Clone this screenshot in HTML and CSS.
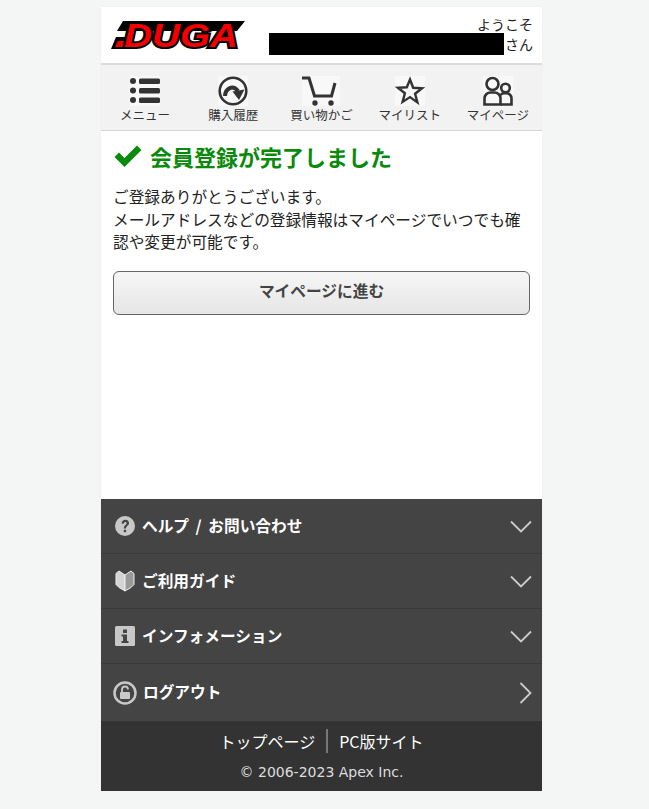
FILE: index.html
```html
<!DOCTYPE html>
<html lang="ja">
<head>
<meta charset="utf-8">
<title>DUGA</title>
<link rel="stylesheet" href="styles.css">
</head>
<body>
<div class="page">
  <header class="top">
    <svg class="logo" viewBox="0 0 134 40"><polygon points="12,4 134,4 126,14 6,14" fill="#000"/><polygon points="0,32 5,20 24,20 18,32" fill="#000"/><polygon points="4,30 7,24 22,24 20,30" fill="#f40000"/><text class="logo-text" x="13" y="30" textLength="114" lengthAdjust="spacingAndGlyphs">DUGA</text></svg>
    <div class="welcome">
      <div>ようこそ</div>
      <div class="user"><span class="redact"></span><span>さん</span></div>
    </div>
  </header>
  <nav class="nav">
    <a class="nav-item"><svg class="nav-icon" viewBox="0 0 30 30"><rect x="0" y="2" width="6" height="6" rx="3"/><rect x="0" y="11.500" width="6" height="6" rx="3"/><rect x="0" y="21" width="6" height="6" rx="3"/><rect x="9" y="2.500" width="21" height="5.500" rx="1.500"/><rect x="9" y="12" width="21" height="5.500" rx="1.500"/><rect x="9" y="21.500" width="21" height="5.500" rx="1.500"/></svg><span>メニュー</span></a>
    <a class="nav-item"><svg class="nav-icon" viewBox="0 0 30 30"><circle cx="15" cy="15" r="13.300" fill="none" stroke="#333" stroke-width="2.600"/><path d="M7 20C7.500 12 15 8.500 20 15" fill="none" stroke="#333" stroke-width="4"/><polygon points="14.500,15.500 26.500,13.500 21,24"/></svg><span>購入履歴</span></a>
    <a class="nav-item"><svg class="nav-icon cart" viewBox="0 0 38 30"><path d="M0 2h7l5.500 18h17l3.500-13" fill="none" stroke="#333" stroke-width="3"/><circle cx="13" cy="27" r="2.700"/><circle cx="29" cy="27" r="2.700"/></svg><span>買い物かご</span></a>
    <a class="nav-item"><svg class="nav-icon" viewBox="0 0 30 30"><path d="M15 3.500l3.200 8.300 8.800 0.500-6.900 5.500 2.300 8.600L15 21.100l-7.400 4.800 2.300-8.600L3 11.800l8.800-0.500z" fill="none" stroke="#333" stroke-width="2.400"/></svg><span>マイリスト</span></a>
    <a class="nav-item"><svg class="nav-icon" viewBox="0 0 30 30"><g fill="none" stroke="#333" stroke-width="2.600"><circle cx="9.500" cy="8" r="6"/><circle cx="22.500" cy="12" r="4.300"/><path d="M1.500 28.500v-6a6 6 0 0 1 6-6h4a6 6 0 0 1 6 6v6z"/><path d="M17.500 19a5 5 0 0 1 4-1.700h2a5 5 0 0 1 5 5v6.200h-11"/></g></svg><span>マイページ</span></a>
  </nav>
  <main class="main">
    <h1 class="done"><svg class="check" viewBox="0 0 30 24"><path d="M1.500 13l4.500-4.500 5.500 5.500L24 1.500l4.500 4.500-17 17z"/></svg>会員登録が完了しました</h1>
    <p class="msg">ご登録ありがとうございます。<br>メールアドレスなどの登録情報はマイページでいつでも確認や変更が可能です。</p>
    <a class="btn">マイページに進む</a>
  </main>
  <ul class="menu">
    <li class="row"><svg class="mi" viewBox="0 0 20 20"><circle cx="10" cy="10" r="10" fill="#c8c8c8"/><path d="M6.500 7.500c0-5 7.500-5 7.500-0.500 0 3-3 2.800-3 5.500H8.800c0-3.500 2.800-3.500 2.800-5.300 0-1.700-2.600-1.700-2.800 0.500z" fill="#444"/><rect x="8.800" y="13.800" width="2.300" height="2.400" fill="#444"/></svg><span class="label">ヘルプ / お問い合わせ</span><svg class="chev" viewBox="0 0 22 14"><path d="M1 1.500l10 10 10-10"/></svg></li>
    <li class="row"><svg class="mi mi-book" viewBox="0 0 20 22"><path d="M1 3.500l3-2.500 6 4v16l-6-3.500-3-3z" fill="#d4d4d4" stroke="#eee"/><path d="M19 3.500l-3-2.500-6 4v16l6-3.500 3-3z" fill="#9a9a9a" stroke="#eee"/></svg><span class="label">ご利用ガイド</span><svg class="chev" viewBox="0 0 22 14"><path d="M1 1.500l10 10 10-10"/></svg></li>
    <li class="row"><svg class="mi" viewBox="0 0 20 20"><rect width="20" height="20" rx="1.500" fill="#c8c8c8"/><rect x="8" y="3.500" width="4" height="3.500" fill="#444"/><path d="M6.500 8.500H12v6.500h1.500v2h-7v-2H8v-4.500H6.500z" fill="#444"/></svg><span class="label">インフォメーション</span><svg class="chev" viewBox="0 0 22 14"><path d="M1 1.500l10 10 10-10"/></svg></li>
    <li class="row"><svg class="mi mi-lg" viewBox="0 0 24 24"><circle cx="12" cy="12" r="10.500" fill="none" stroke="#c8c8c8" stroke-width="2.500"/><rect x="7" y="11" width="10" height="7" rx="1" fill="#c8c8c8"/><path d="M9 11V8.500a3 3 0 0 1 6 0" fill="none" stroke="#c8c8c8" stroke-width="1.800"/></svg><span class="label">ログアウト</span><svg class="chev chev-r" viewBox="0 0 14 22"><path d="M1.500 1l10 10-10 10"/></svg></li>
  </ul>
  <footer class="foot">
    <div class="links"><a>トップページ</a><a class="sep">PC版サイト</a></div>
    <div class="copy">© 2006-2023 Apex Inc.</div>
  </footer>
</div>
</body>
</html>
```
FILE: styles.css
```css
* { box-sizing: border-box; }
html, body { margin: 0; padding: 0; }
body {
  background: #f4f6f5;
  padding-top: 7px;
  font-family: "Noto Sans CJK JP", "Noto Sans", sans-serif;
  color: #222;
}
.page {
  width: 441px;
  margin-left: 101px;
  background: #fff;
  box-shadow: 0 0 1px #ddd;
}
.top {
  height: 58px;
  display: flex;
  justify-content: space-between;
  padding: 0 9px 0 10px;
  border-bottom: 2px solid #dcdcdc;
}
.logo { width: 134px; height: 40px; margin-top: 10px; flex: none; }
.logo-text {
  font-family: "Liberation Sans", sans-serif;
  font-size: 33px;
  font-weight: 700;
  font-style: italic;
  fill: #f40000;
  stroke: #000;
  stroke-width: 4px;
  paint-order: stroke;
  stroke-linejoin: miter;
}
.welcome {
  width: 264px;
  font-size: 14px;
  line-height: 20px;
  text-align: right;
  padding-top: 7px;
}
.user { display: flex; justify-content: flex-end; align-items: center; margin-top: -1px; }
.redact { width: 235px; height: 22px; background: #000; margin-right: 1px; }
.nav {
  height: 66px;
  display: grid;
  grid-template-columns: repeat(5, 1fr);
  background: #f2f2f2;
  border-bottom: 1px solid #d6d6d6;
  padding-top: 11px;
}
.nav-item {
  display: flex;
  flex-direction: column;
  align-items: center;
  font-size: 12.500px;
  line-height: 16px;
  color: #333;
  white-space: nowrap;
}
.nav-icon { width: 30px; height: 30px; fill: #333; margin-bottom: 1px; background: #f8f8f8; }
.cart { width: 38px; }
.main { height: 368px; padding: 10px 12px 0; }
.done {
  margin: 0;
  display: flex;
  align-items: center;
  gap: 7px;
  font-size: 22px;
  line-height: 30px;
  font-weight: 700;
  color: #0a8a0a;
}
.check { width: 30px; height: 24px; fill: #0a8a0a; }
.msg { margin: 15px 0 0; font-size: 15.700px; line-height: 22.500px; color: #222; }
.btn {
  display: block;
  height: 44px;
  margin-top: 17.500px;
  border: 1px solid #666;
  border-radius: 6px;
  background: linear-gradient(#f6f6f6, #e6e6e6);
  text-align: center;
  font-size: 15.700px;
  font-weight: 700;
  line-height: 38px;
  color: #444;
}
.menu { margin: 0; padding: 0; list-style: none; background: #444; }
.row {
  display: flex;
  align-items: center;
  height: 55px;
  padding: 0 10px 0 14px;
  border-bottom: 1px solid #3a3a3a;
  color: #fff;
  font-size: 15.700px;
  font-weight: 700;
}
.row:last-child { height: 57px; border-bottom: 0; padding-left: 12px; padding-right: 9px; }
.mi { width: 20px; height: 20px; margin-right: 7px; flex: none; }
.mi-book { height: 22px; }
.mi-lg { width: 24px; height: 24px; margin-right: 6px; }
.label { flex: 1; padding-bottom: 2px; word-spacing: 3px; }
.chev { width: 22px; height: 14px; margin-top: 2px; fill: none; stroke: #ccc; stroke-width: 1.800; }
.chev-r { width: 14px; height: 22px; margin-top: 0; }
.foot {
  height: 70px;
  background: #333;
  color: #fff;
  text-align: center;
  padding-top: 8px;
}
.links { display: flex; justify-content: center; font-size: 16px; line-height: 24px; }
.sep { margin-left: 11px; padding-left: 11px; border-left: 2px solid #777; }
.copy { margin-top: 9px; font-family: "DejaVu Sans", sans-serif; font-size: 14px; line-height: 20px; color: #ddd; }
```
